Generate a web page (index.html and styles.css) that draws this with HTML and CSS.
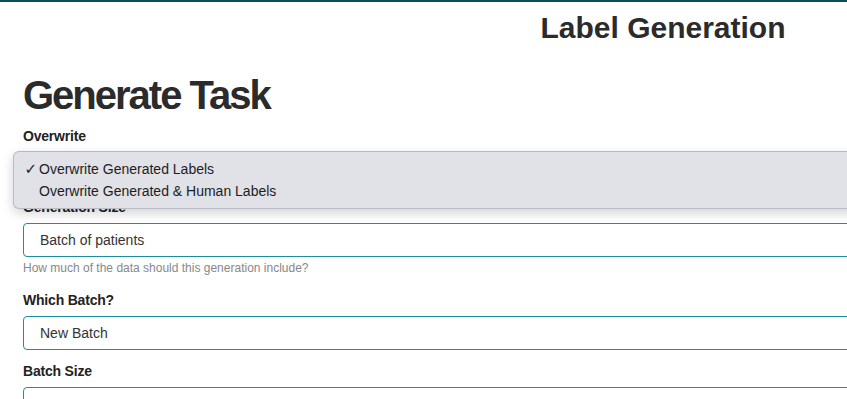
FILE: index.html
```html
<!DOCTYPE html>
<html lang="en">
<head>
    <meta charset="UTF-8">
    <meta name="viewport" content="width=device-width, initial-scale=1.0">
    <title>Label Generation</title>
    <link rel="stylesheet" href="styles.css">
</head>
<body>
    <div class="topbar"></div>
    <div class="page">
        <h1 class="title">Label Generation</h1>

        <div class="form">
            <h2 class="form-title">Generate Task</h2>

            <div class="field">
                <label class="label">Overwrite</label>
                <div class="select-wrap">
                    <div class="input">Overwrite Generated Labels</div>
                    <!-- open dropdown -->
                    <ul class="menu">
                        <li class="option"><span class="check">&#10003;</span>Overwrite Generated Labels</li>
                        <li class="option"><span class="check"></span>Overwrite Generated &amp; Human Labels</li>
                    </ul>
                </div>
            </div>

            <div class="field">
                <label class="label">Generation Size</label>
                <div class="input">Batch of patients</div>
                <div class="help">How much of the data should this generation include?</div>
            </div>

            <div class="field">
                <label class="label">Which Batch?</label>
                <div class="input">New Batch</div>
            </div>

            <div class="field">
                <label class="label">Batch Size</label>
                <div class="input"></div>
            </div>
        </div>
    </div>
</body>
</html>
```

FILE: styles.css
```css
body {
    margin: 0;
    background-color: #fff;
    font-family: "Liberation Sans", Arial, sans-serif;
    color: #222;
    overflow: hidden;
}
.topbar {
    height: 2px;
    background-color: #0b4d56;
}
.page {
    width: 1326px;
}
.title {
    margin: 8px 0 0;
    font-size: 30px;
    line-height: 36px;
    font-weight: bold;
    text-align: center;
    color: #2b2b2b;
}
.form {
    padding: 0 23px;
}
.form-title {
    margin: 25px 0 7px;
    font-size: 40px;
    line-height: 48px;
    font-weight: bold;
    letter-spacing: -2px;
    color: #2b2b2b;
}
.field {
    margin-bottom: 11px;
}
.label {
    display: block;
    margin-bottom: 6px;
    font-size: 14px;
    line-height: 20px;
    font-weight: bold;
    letter-spacing: -0.2px;
    color: #222;
}
.input {
    box-sizing: border-box;
    height: 34px;
    padding: 0 16px;
    border: 1px solid #1c8ea0;
    border-radius: 4px;
    font-size: 14px;
    line-height: 32px;
    color: #333;
}
.help {
    margin-top: 4px;
    padding-bottom: 3px;
    font-size: 12px;
    line-height: 15px;
    color: #888;
}
.select-wrap {
    position: relative;
}
.menu {
    position: absolute;
    top: -1px;
    left: -10px;
    right: 0;
    margin: 0;
    padding: 6px 0 6px;
    list-style: none;
    background-color: #e1e2e7;
    border: 1px solid #b8bcc4;
    border-top-color: #a9bdcf;
    border-radius: 6px;
    box-shadow: 0 4px 12px rgba(0, 0, 0, 0.18);
}
.option {
    display: flex;
    align-items: center;
    height: 22px;
    font-size: 14px;
    color: #1d1d1f;
}
.check {
    width: 25px;
    text-align: right;
    padding-right: 2px;
    box-sizing: border-box;
    font-family: "DejaVu Sans", sans-serif;
    font-size: 15px;
}
```
